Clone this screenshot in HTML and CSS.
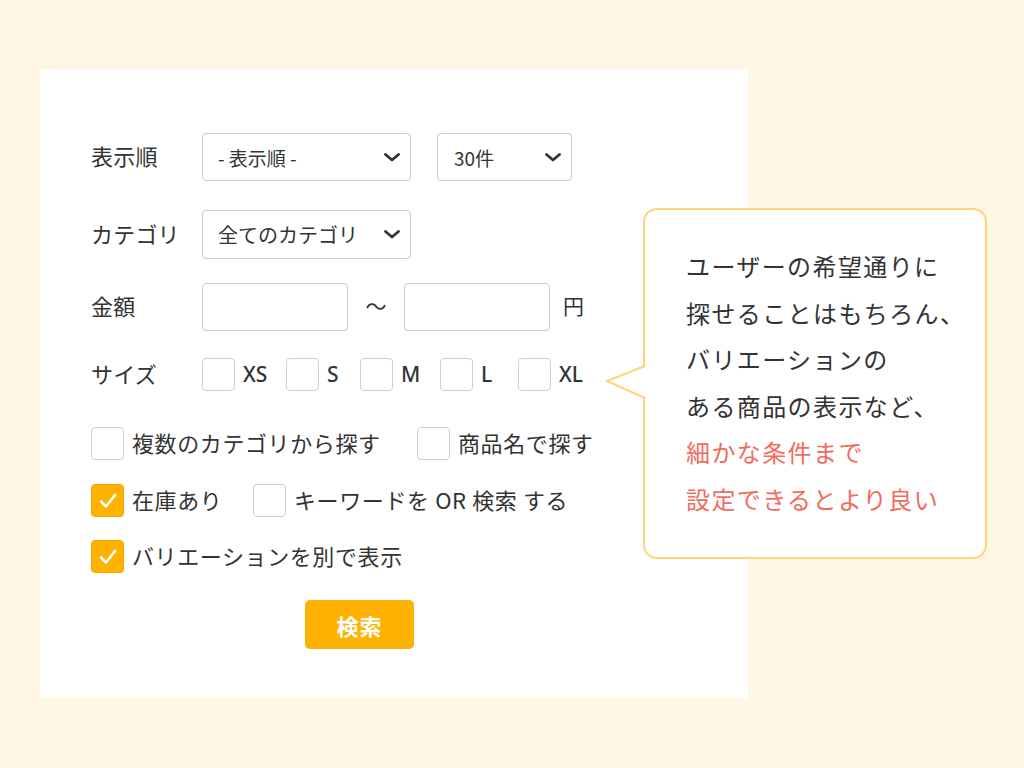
FILE: index.html
```html
<!DOCTYPE html>
<html lang="ja">
<head>
<meta charset="utf-8">
<title>検索フォーム</title>
<link rel="stylesheet" href="styles.css">
</head>
<body>
<div class="stage">
  <div class="panel">
    <div class="row row-sort">
      <div class="label">表示順</div>
      <div class="controls">
        <div class="select sel-sort"><span>- 表示順 -</span><svg class="chev" viewBox="0 0 16 9" width="16" height="9"><polyline points="1.5,1.5 8,7 14.5,1.5"/></svg></div>
        <div class="select sel-count"><span>30件</span><svg class="chev" viewBox="0 0 16 9" width="16" height="9"><polyline points="1.5,1.5 8,7 14.5,1.5"/></svg></div>
      </div>
    </div>
    <div class="row row-cat">
      <div class="label">カテゴリ</div>
      <div class="controls">
        <div class="select sel-cat"><span>全てのカテゴリ</span><svg class="chev" viewBox="0 0 16 9" width="16" height="9"><polyline points="1.5,1.5 8,7 14.5,1.5"/></svg></div>
      </div>
    </div>
    <div class="row row-price">
      <div class="label">金額</div>
      <div class="controls">
        <div class="input"></div>
        <span class="tilde">～</span>
        <div class="input"></div>
        <span class="yen">円</span>
      </div>
    </div>
    <div class="row row-size">
      <div class="label">サイズ</div>
      <div class="controls sizes">
        <div class="size s-xs"><span class="box"></span><span class="sz">XS</span></div>
        <div class="size s-s"><span class="box"></span><span class="sz">S</span></div>
        <div class="size s-m"><span class="box"></span><span class="sz">M</span></div>
        <div class="size s-l"><span class="box"></span><span class="sz">L</span></div>
        <div class="size s-xl"><span class="box"></span><span class="sz">XL</span></div>
      </div>
    </div>
    <div class="checks">
      <div class="check-row r1">
        <div class="check c-multi"><span class="box"></span><span class="ct">複数のカテゴリから探す</span></div>
        <div class="check"><span class="box"></span><span class="ct">商品名で探す</span></div>
      </div>
      <div class="check-row r2">
        <div class="check c-stock"><span class="box on"><svg viewBox="0 0 24 24" width="24" height="24"><polyline points="5,12.5 10,17.5 19,6"/></svg></span><span class="ct">在庫あり</span></div>
        <div class="check"><span class="box"></span><span class="ct">キーワードを OR 検索 する</span></div>
      </div>
      <div class="check-row r3">
        <div class="check"><span class="box on"><svg viewBox="0 0 24 24" width="24" height="24"><polyline points="5,12.5 10,17.5 19,6"/></svg></span><span class="ct">バリエーションを別で表示</span></div>
      </div>
    </div>
    <div class="btn-wrap"><button class="btn">検索</button></div>
  </div>

  <div class="bubble">
    <svg class="tail" viewBox="0 0 44 36" width="44" height="36"><polygon class="tail-fill" points="40,1 2,16 40,33 44,33 44,1"/><polyline class="tail-line" points="40,1 2,16 40,33"/></svg>
    <p class="bt">ユーザーの希望通りに</p>
    <p class="bt">探せることはもちろん、</p>
    <p class="bt">バリエーションの</p>
    <p class="bt">ある商品の表示など、</p>
    <p class="bt red">細かな条件まで</p>
    <p class="bt red">設定できるとより良い</p>
  </div>
</div>
</body>
</html>
```

FILE: styles.css
```css
* { box-sizing: border-box; }

html, body {
  margin: 0;
  padding: 0;
}

body {
  background: #fff7e4;
  font-family: "Noto Sans CJK JP", "Noto Sans", sans-serif;
  font-weight: 400;
  color: #333333;
  width: 1024px;
  height: 768px;
  overflow: hidden;
}

.stage {
  position: relative;
  padding: 69px 0 0 40px;
}

.panel {
  width: 708px;
  height: 629px;
  background: #ffffff;
  padding: 64px 0 0 51px;
}

.row {
  display: flex;
  align-items: center;
}

.label {
  width: 111px;
  font-size: 22px;
  letter-spacing: 0.2px;
  line-height: 1;
  flex: none;
  position: relative;
  top: -2px;
}

.controls {
  display: flex;
  align-items: center;
}

.select {
  height: 48px;
  border: 1px solid #c9c9c9;
  border-radius: 4px;
  display: flex;
  align-items: center;
  justify-content: space-between;
  padding: 0 10px 0 15px;
  font-size: 19px;
}

.select span { line-height: 1; }

.chev {
  fill: none;
  stroke: #333;
  stroke-width: 2.8;
  stroke-linecap: round;
  stroke-linejoin: round;
}

.sel-sort { width: 209px; }
.sel-count { width: 135px; margin-left: 26px; padding-left: 16px; }
.sel-cat { width: 209px; height: 49px; font-size: 20px; }

.row-cat { margin-top: 29px; }
.row-price { margin-top: 24px; }
.row-size { margin-top: 27px; }

.input {
  width: 146px;
  height: 48px;
  border: 1px solid #c9c9c9;
  border-radius: 4px;
}

.tilde {
  width: 56px;
  text-align: center;
  font-size: 21px;
  line-height: 1;
  position: relative;
  top: -2px;
}

.yen {
  margin-left: 13px;
  font-size: 21px;
  line-height: 1;
  position: relative;
  top: -2px;
}

.box {
  display: inline-flex;
  align-items: center;
  justify-content: center;
  width: 33px;
  height: 33px;
  border: 1px solid #cfcfcf;
  border-radius: 4px;
  background: #fff;
  flex: none;
}

.box.on {
  background: #ffb300;
  border-color: #f2aa00;
}

.box svg {
  fill: none;
  stroke: #fff;
  stroke-width: 2.6;
  stroke-linecap: round;
  stroke-linejoin: round;
}

.sizes .size {
  display: flex;
  align-items: center;
}

.sz {
  margin-left: 8px;
  font-family: "Noto Sans", "Open Sans", sans-serif;
  font-size: 21px;
  font-weight: 500;
  line-height: 1;
}

.s-xs { width: 84px; }
.s-s { width: 74px; }
.s-m { width: 80px; }
.s-l { width: 78px; }

.checks {
  margin-top: 36px;
}

.check-row {
  display: flex;
  align-items: center;
}

.check-row.r2 { margin-top: 24px; }
.check-row.r3 { margin-top: 23px; }

.check {
  display: flex;
  align-items: center;
}

.ct {
  margin-left: 8px;
  font-size: 22px;
  letter-spacing: 0.6px;
  line-height: 1;
  position: relative;
  top: -2px;
}

.c-multi { width: 326px; }
.c-stock { width: 162px; }

.btn-wrap {
  margin-top: 27px;
  padding-left: 214px;
}

.btn {
  width: 109px;
  height: 49px;
  border: none;
  border-radius: 5px;
  background: #ffb300;
  color: #fff;
  font-family: "Noto Sans CJK JP", sans-serif;
  font-size: 22px;
  font-weight: 700;
  letter-spacing: 1px;
  padding: 0;
}

.bubble {
  position: absolute;
  left: 643px;
  top: 208px;
  width: 344px;
  height: 351px;
  background: #fff;
  border: 2px solid #ffd57a;
  border-radius: 14px;
  padding: 33px 0 0 41px;
}

.bt {
  margin: 0;
  font-size: 24px;
  line-height: 46.5px;
  letter-spacing: 1.4px;
  color: #333333;
  white-space: nowrap;
}

.bt.red { color: #f26b5d; }

.tail {
  position: absolute;
  left: -40px;
  top: 155px;
  overflow: visible;
}

.tail-fill { fill: #fff; }

.tail-line {
  fill: none;
  stroke: #ffd57a;
  stroke-width: 2;
  stroke-linejoin: miter;
}
```
